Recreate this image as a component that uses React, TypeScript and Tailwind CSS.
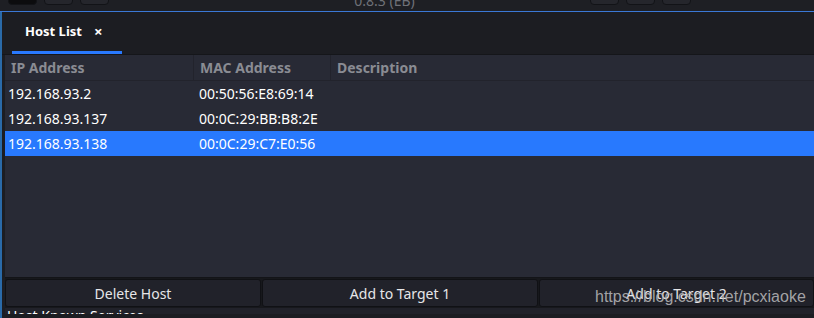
const hosts = [
  { ip: "192.168.93.2", mac: "00:50:56:E8:69:14" },
  { ip: "192.168.93.137", mac: "00:0C:29:BB:B8:2E" },
  { ip: "192.168.93.138", mac: "00:0C:29:C7:E0:56", selected: true },
];

const TitleButton = ({ dark }: { dark?: boolean }) => (
  <div
    className={`h-[14px] w-[29px] -mt-[9px] rounded-[4px] border border-[#121317] ${
      dark ? "bg-[#0c0c0e]" : "bg-[#25262c]"
    }`}
  />
);

const App = () => {
  return (
    <div className="relative w-[814px] h-[318px] overflow-hidden bg-[#1c1d22] flex flex-col font-['Noto_Sans',sans-serif] text-[14px]">
      {/* title bar, mostly cut off */}
      <div className="h-[11px] shrink-0 flex bg-[#1e1f24] overflow-hidden">
        <div className="flex gap-[7px] pl-[8px]">
          <TitleButton dark />
          <TitleButton />
          <TitleButton />
        </div>
        <div className="flex-1 flex justify-center">
          <span className="-mt-[7px] pl-[70px] text-[14px] leading-[16px] text-[#6f7178]">0.8.3 (EB)</span>
        </div>
        <div className="flex gap-[7px] pr-[123px]">
          <TitleButton />
          <TitleButton />
          <TitleButton />
        </div>
      </div>
      <div className="h-px shrink-0 bg-[#3a78d6]" />

      <div className="flex-1 flex border-l-2 border-[#2a6aa8] min-h-0">
        <div className="flex-1 flex flex-col min-w-0">
          {/* tab bar */}
          <div className="h-[43px] shrink-0 flex items-end pl-[10px] border-b border-[#15161a]">
            <div className="w-[110px] h-full flex flex-col">
              <div className="flex-1 flex items-center pl-[13px] gap-[12px] text-white">
                <span className="font-bold text-[13px]">Host List</span>
                <span className="font-bold text-[15px]">×</span>
              </div>
              <div className="h-[3px] bg-[#2979fe]" />
            </div>
          </div>

          {/* table */}
          <div className="flex-1 flex flex-col pl-[3px] min-h-0">
            <div className="flex-1 bg-[#282a35] flex flex-col">
              <div className="h-[26px] shrink-0 flex border-b border-[#22232c] text-[#8a8c93] font-bold">
                <div className="w-[189px] pl-[6px] flex items-center border-r border-[#22232c]">IP Address</div>
                <div className="w-[137px] pl-[6px] flex items-center border-r border-[#22232c]">MAC Address</div>
                <div className="flex-1 pl-[6px] flex items-center">Description</div>
              </div>
              {hosts.map((h) => (
                <div
                  key={h.ip}
                  className={`h-[25px] shrink-0 flex items-center text-white ${h.selected ? "bg-[#2879fe]" : ""}`}
                >
                  <div className="w-[189px] pl-[3px]">{h.ip}</div>
                  <div className="w-[137px] pl-[5px]">{h.mac}</div>
                  <div className="flex-1" />
                </div>
              ))}
            </div>

            {/* action buttons */}
            <div className="h-[31px] shrink-0 flex bg-[#17181c] border-t border-[#131418] pt-px pb-[1px] gap-[1px]">
              {["Delete Host", "Add to Target 1", "Add to Target 2"].map((label, i) => (
                <button
                  key={label}
                  className={`${
                    i === 0 ? "w-[256px]" : i === 1 ? "w-[276px]" : "flex-1"
                  } rounded-[3px] border border-[#101115] bg-[#21222a] text-[#e6e6e8] text-[14px]`}
                >
                  {label}
                </button>
              ))}
            </div>

            {/* next pane, cut off */}
            <div className="h-[10px] shrink-0 bg-[#1c1d22]">
              <div className="h-[6px] overflow-hidden bg-[#21222a]">
                <div className="mt-[1px] pl-[2px] text-white text-[14px] leading-[14px]">Host Known Services</div>
              </div>
            </div>
          </div>
        </div>
      </div>

      <div className="absolute left-[595px] top-[288px] whitespace-nowrap text-[16px] leading-[18px] text-[#b4b4b6]/90 font-['Liberation_Sans',sans-serif]">
        https://blog.csdn.net/pcxiaoke
      </div>
    </div>
  );
};

export default App;
